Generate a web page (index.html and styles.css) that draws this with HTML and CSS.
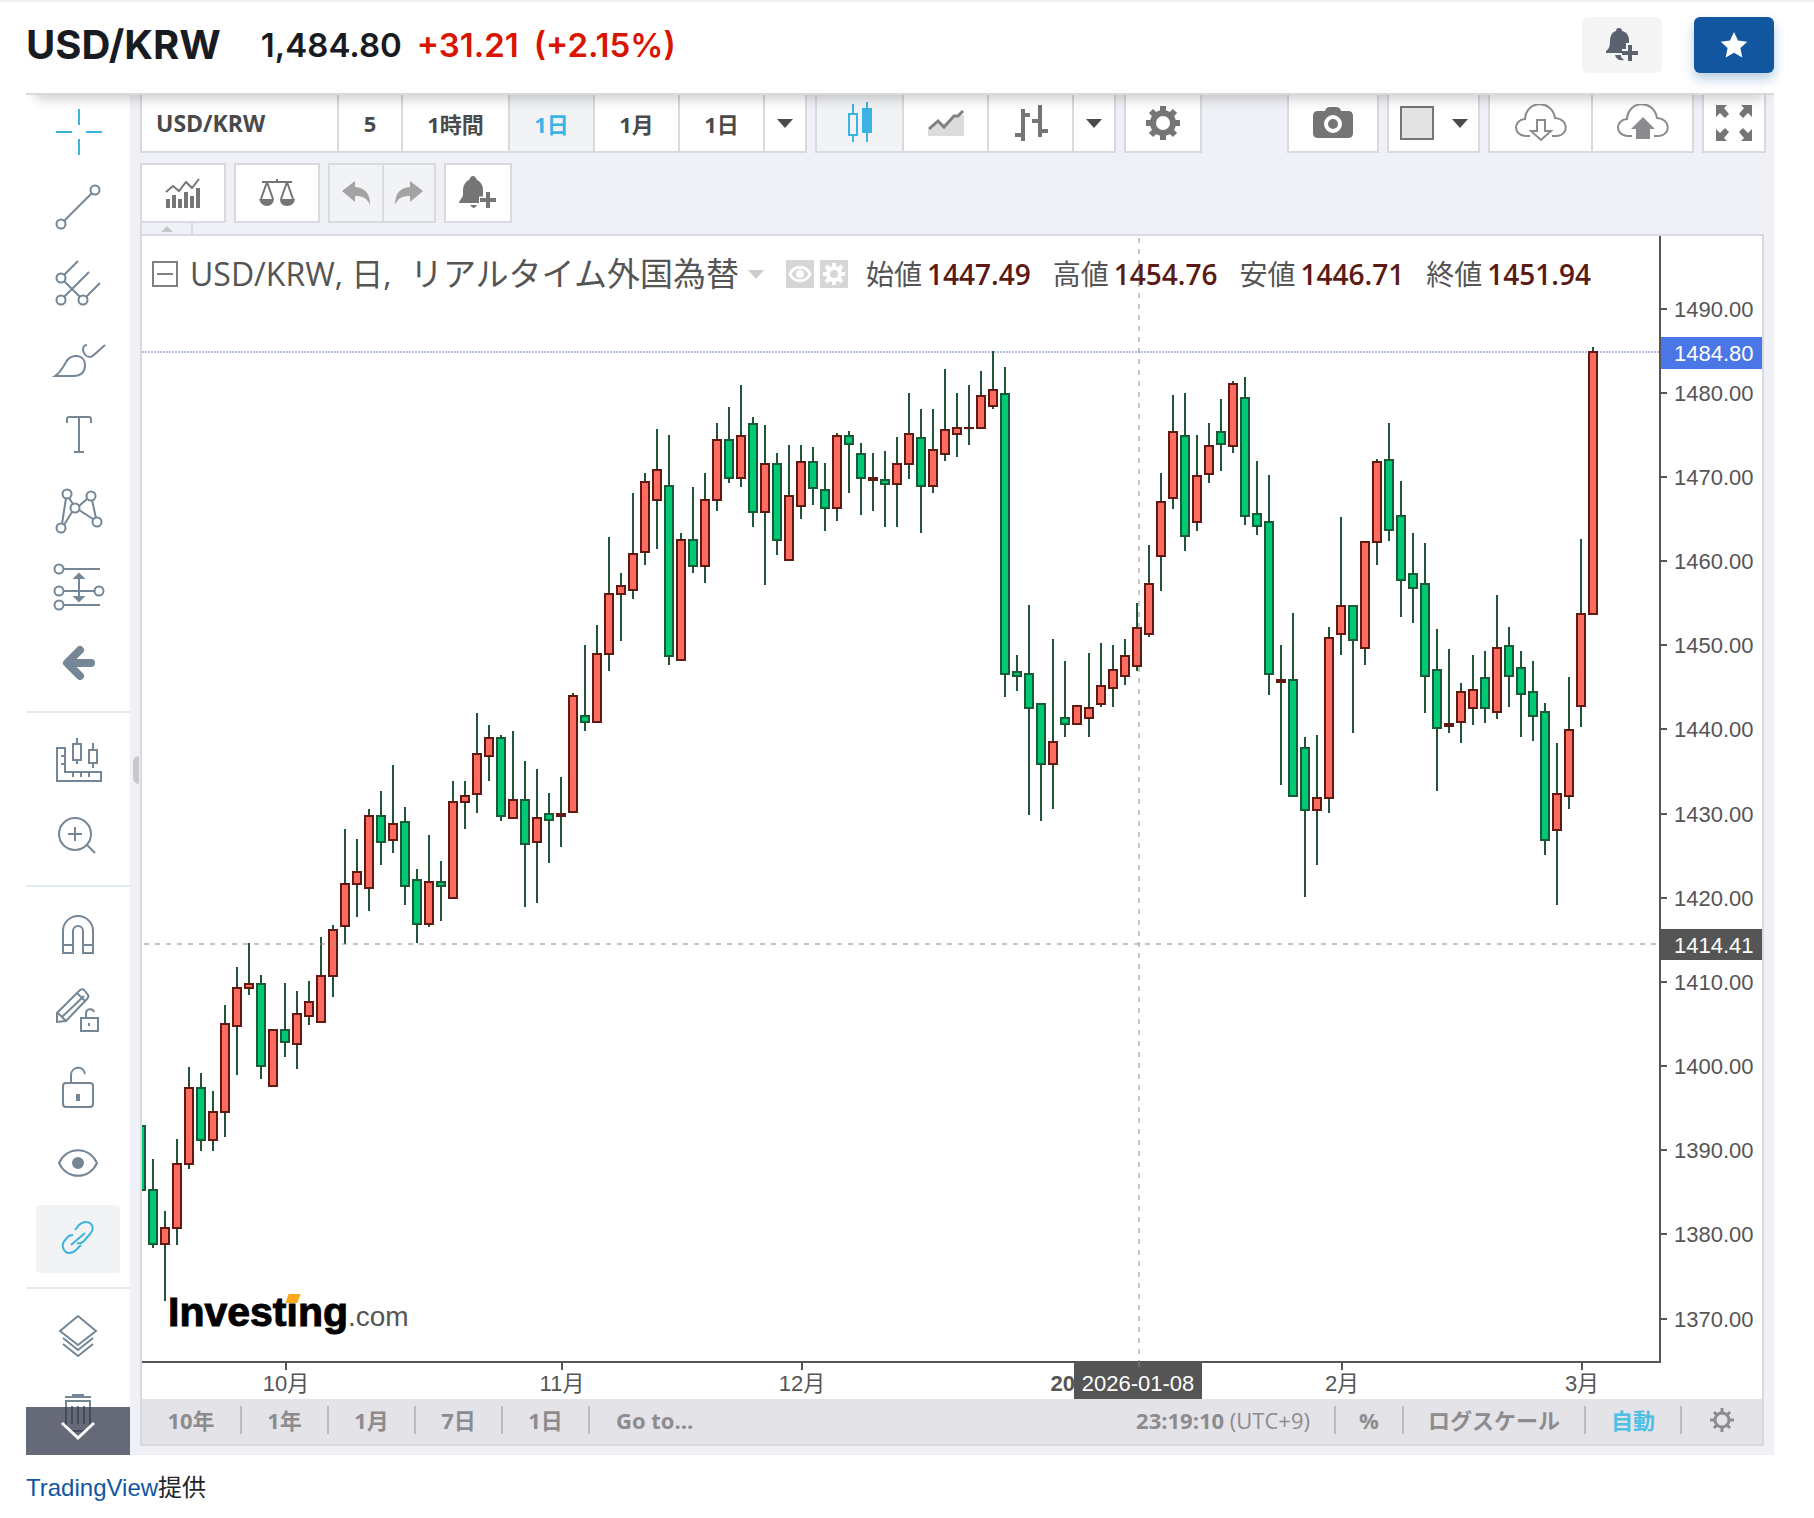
FILE: index.html
```html
<!DOCTYPE html>
<html lang="ja">
<head>
    <meta charset="UTF-8">
    <meta name="viewport" content="width=device-width, initial-scale=1.0">
    <title>USD/KRW</title>
    <link rel="stylesheet" href="styles.css">
</head>
<body>
    <header class="quote">
        <h1>USD/KRW</h1>
        <span class="price">1,484.80</span>
        <span class="change">+31.21</span>
        <span class="change">(+2.15%)</span>
        <div class="quote-actions">
            <button type="button" class="btn-alert" aria-label="Alert">
                <svg width="36" height="36" viewBox="0 0 36 36"><path fill="#5b616e" d="M15 1c2 0 3 1 3 3 5 1 7 5 7 9v3h-3v6h-4v4H2v-2c3-2 4-5 4-10 0-5 2-9 6-10 0-2 1-3 3-3zM11 28h6v2l3 3c-5 1-8-1-9-5z"/><path stroke="#5b616e" stroke-width="4" d="M26 18v16M18 26h16"/></svg>
            </button>
            <button type="button" class="btn-star" aria-label="Star">
                <svg width="28" height="28" viewBox="0 0 28 28"><path fill="#fff" d="M14 1l4 8.600 9.300 1.100-6.900 6.400 1.900 9.300L14 21.800l-8.300 4.600 1.900-9.300L.7 10.700 10 9.600z"/></svg>
            </button>
        </div>
    </header>

    <main class="terminal">
        <aside class="tools">
            <div class="tool-group">
                <button type="button" class="tool active" aria-label="Crosshair"><svg viewBox="0 0 52 52"><path d="M27 4v16M27 34v16M4 27h16M34 27h16"/></svg></button>
                <button type="button" class="tool" aria-label="Trend line"><svg viewBox="0 0 52 52"><circle cx="43" cy="9" r="4.500"/><circle cx="9" cy="43" r="4.500"/><path d="M40 12L12 40"/></svg></button>
                <button type="button" class="tool" aria-label="Pitchfork"><svg viewBox="0 0 52 52"><circle cx="9" cy="21" r="4.500"/><circle cx="9" cy="43" r="4.500"/><circle cx="31" cy="43" r="4.500"/><path d="M12 18L26 4M12 40l25-25M34 40l14-14M12 24l16 16"/></svg></button>
                <button type="button" class="tool" aria-label="Brush"><svg viewBox="0 0 52 52"><path d="M3 43c6-4 8-9 11-14 5-9 19-8 19 3 0 8-5 11-12 11zM35 12c-7 0-4 12 3 12 2 0 3-1 5-3l10-9"/></svg></button>
                <button type="button" class="tool" aria-label="Text"><svg viewBox="0 0 52 52"><path d="M15 14V10q0-2 2-2h20q2 0 2 2v4M27 8v35M22 43h10"/></svg></button>
                <button type="button" class="tool" aria-label="Pattern"><svg viewBox="0 0 52 52"><circle cx="15" cy="9" r="4.500"/><circle cx="39" cy="11" r="4.500"/><circle cx="23" cy="23" r="4.500"/><circle cx="9" cy="43" r="4.500"/><circle cx="45" cy="37" r="4.500"/><path d="M14 13L10 39M12 40l8-13M17 13l4 6M27 21l8-7M27 25l14 9M40 15l4 18"/></svg></button>
                <button type="button" class="tool" aria-label="Forecast"><svg viewBox="0 0 52 52"><circle cx="7" cy="8" r="4.500"/><circle cx="7" cy="30" r="4.500"/><circle cx="7" cy="44" r="4.500"/><circle cx="47" cy="30" r="4.500"/><path d="M12 8h36M12 30h31M12 44h36M27 14v26"/><path class="solid" d="M23 17l4-4 4 4zM23 36l4 4 4-4z"/></svg></button>
                <button type="button" class="tool" aria-label="Back"><svg viewBox="0 0 52 52"><path stroke-width="8" stroke-linecap="round" stroke-linejoin="round" d="M28 13L15 26l13 13M17 26h22"/></svg></button>
            </div>
            <div class="tool-group">
                <button type="button" class="tool" aria-label="Measure"><svg viewBox="0 0 52 52"><path d="M5 13h8v24h36v9H5zM9 21h4M9 29h4M21 38v4M29 38v4M37 38v4M25 3v6M25 25v4M21 9h8v16h-8zM41 8v7M41 28v5M37 15h8v13h-8z"/></svg></button>
                <button type="button" class="tool" aria-label="Zoom in"><svg viewBox="0 0 52 52"><circle cx="23" cy="23" r="16"/><path d="M16 23h14M23 16v14M35 34l8 8"/></svg></button>
            </div>
            <div class="tool-group">
                <button type="button" class="tool" aria-label="Magnet"><svg viewBox="0 0 52 52"><path d="M11 44V22a15 15 0 0 1 30 0v22H31V22a5 5 0 0 0-10 0v22zM11 36h10M31 36h10"/></svg></button>
                <button type="button" class="tool" aria-label="Drawing mode"><svg viewBox="0 0 52 52"><path d="M5 37v-9L28 5q3-2 5 1l3 4q1 2-1 4L14 36zM6 28l8 8M10 32l22-21M25 8l8 8M29 33h17v13H29zM34 33v-4c0-6 7-6 8-2M37 38v3"/></svg></button>
                <button type="button" class="tool" aria-label="Lock"><svg viewBox="0 0 52 52"><rect x="11" y="22" width="30" height="24" rx="3"/><path d="M19 22v-8c0-8 12-11 14-1"/><path stroke-width="4" d="M26 33v7"/></svg></button>
                <button type="button" class="tool" aria-label="Hide"><svg viewBox="0 0 52 52"><path d="M7 26c8-17 30-17 38 0-8 17-30 17-38 0z"/><circle class="solid" cx="26" cy="26" r="5"/></svg></button>
                <button type="button" class="tool active pressed" aria-label="Link"><svg viewBox="0 0 52 52"><path d="M19 32l14-12M23 17l4-5c8-8 19 1 11 9l-6 7c-2 2-4 3-7 2M21 22c-3 0-5 1-7 4-7 7-1 14 3 14 3 0 5-1 7-3l5-5"/></svg></button>
            </div>
            <div class="tool-group">
                <button type="button" class="tool" aria-label="Object tree"><svg viewBox="0 0 52 52"><path d="M26 5l18 15-18 14L8 20zM11 27l15 12 15-12M11 33l15 12 15-12"/></svg></button>
                <button type="button" class="tool" aria-label="Remove"><svg viewBox="0 0 52 52"><path d="M13 10h26M20 8h12M14 14h24v24q0 6-6 6H20q-6 0-6-6zM20 19v18M26 19v18M32 19v18"/></svg></button>
            </div>
            <button type="button" class="tools-more" aria-label="More"><svg width="36" height="22" viewBox="0 0 36 22"><path d="M2 3l16 15L34 3"/></svg></button>
        </aside>

        <section class="workspace">
            <span class="handle"></span>
            <div class="bar bar-top">
                <div class="group">
                    <button type="button" class="cell symbol">USD/KRW</button>
                    <button type="button" class="cell small">5</button>
                    <button type="button" class="cell wide">1時間</button>
                    <button type="button" class="cell selected">1日</button>
                    <button type="button" class="cell">1月</button>
                    <button type="button" class="cell">1日</button>
                    <button type="button" class="cell arrow" aria-label="More intervals"><i class="caret"></i></button>
                </div>
                <div class="group">
                    <button type="button" class="cell selected" aria-label="Candles"><svg width="26" height="42" viewBox="0 0 26 42"><path fill="none" stroke="#3bb3e4" stroke-width="2" d="M6 2v10M6 34v6M2 12h8v21H2zM20 0v40"/><path fill="#3bb3e4" d="M15 6h10v25H15z"/></svg></button>
                    <button type="button" class="cell" aria-label="Line chart"><svg width="36" height="26" viewBox="0 0 36 26"><path fill="#dcdcdc" d="M0 20l11-9 7 5L27 5h9v21H0z"/><path fill="none" stroke="#808080" stroke-width="3" d="M1 19l9-8 6 6L26 6h4l5-5"/></svg></button>
                    <button type="button" class="cell" aria-label="Bars"><svg width="34" height="38" viewBox="0 0 34 38"><path stroke="#757575" stroke-width="4" d="M9 5v32M1 31h8M9 11h7M26 1v32M18 17h8M26 27h8"/></svg></button>
                    <button type="button" class="cell arrow" aria-label="More styles"><i class="caret"></i></button>
                </div>
                <div class="group">
                    <button type="button" class="cell gear" aria-label="Settings"><svg width="36" height="36" viewBox="-18 -18 36 36"><circle r="10" fill="none" stroke="#757575" stroke-width="6"/><path stroke="#757575" stroke-width="6" d="M0-17v6M0 17v-6M-17 0h6M17 0h-6M-12-12l4 4M12 12l-4-4M-12 12l4-4M12-12l-4 4"/></svg></button>
                </div>
                <div class="group push">
                    <button type="button" class="cell" aria-label="Snapshot"><svg width="40" height="32" viewBox="0 0 40 32"><path fill="#757575" d="M12 4q1-4 5-4h6q4 0 5 4h7q5 0 5 5v17q0 5-5 5H5q-5 0-5-5V9q0-5 5-5z"/><circle cx="20" cy="17" r="7" fill="#757575" stroke="#fff" stroke-width="4"/></svg></button>
                </div>
                <div class="group">
                    <button type="button" class="cell color" aria-label="Colour"><i class="swatch"></i><i class="caret"></i></button>
                </div>
                <div class="group">
                    <button type="button" class="cell cloud" aria-label="Load"><svg width="54" height="38" viewBox="0 0 54 38"><path fill="none" stroke="#8c8c90" stroke-width="2" d="M16 32H11C-1 31-1 16 11 15 12-4 38-5 41 14c14 1 14 17 2 18h-5"/><path fill="#fff" stroke="#8c8c90" stroke-width="2" d="M23 16h8v11h6L27 36 17 27h6z"/></svg></button>
                    <button type="button" class="cell cloud" aria-label="Save"><svg width="54" height="38" viewBox="0 0 54 38"><path fill="none" stroke="#8c8c90" stroke-width="2" d="M16 32H11C-1 31-1 16 11 15 12-4 38-5 41 14c14 1 14 17 2 18h-5"/><path fill="#8c8c90" d="M20 35V25h-5l12-12 12 12h-5v10z"/></svg></button>
                </div>
                <div class="group">
                    <button type="button" class="cell full" aria-label="Full screen"><svg width="38" height="38" viewBox="0 0 38 38"><path fill="#757575" d="M1 1h11L9 4l5 6-4 4-5-5-4 4zM37 1v12l-4-4-5 5-4-4 5-6-3-3zM1 37V25l4 4 5-5 4 4-5 6 3 3zM37 37H26l3-3-5-6 4-4 5 5 4-4z"/></svg></button>
                </div>
            </div>
            <div class="bar">
                <div class="group">
                    <button type="button" class="cell" aria-label="Indicators"><svg width="36" height="32" viewBox="0 0 36 32"><path fill="none" stroke="#757575" stroke-width="2" d="M1 15l7-6 6 5 7-9 6 6 7-9"/><path stroke="#757575" stroke-width="4" d="M3 31v-9M9 31V18M15 31v-9M21 31V15M27 31V19M33 31V11"/></svg></button>
                </div>
                <div class="group">
                    <button type="button" class="cell" aria-label="Compare"><svg width="36" height="28" viewBox="0 0 36 28"><path fill="none" stroke="#757575" stroke-width="2" d="M3 3h30M18 0v3M8 3L2 20M8 3l6 17M28 3l-6 17M28 3l6 17"/><path fill="#757575" d="M0 20h15q-1 7-7 7t-8-7zM21 20h15q-1 7-8 7t-7-7z"/></svg></button>
                </div>
                <div class="group muted">
                    <button type="button" class="cell step" aria-label="Undo"><svg width="28" height="24" viewBox="0 0 28 24"><path fill="#a3a3a3" d="M0 10L13 0v6c10 1 15 6 15 18-3-7-7-9-15-9v6z"/></svg></button>
                    <button type="button" class="cell step" aria-label="Redo"><svg width="28" height="24" viewBox="0 0 28 24"><path fill="#a3a3a3" d="M28 10L15 0v6C5 7 0 12 0 24c3-7 7-9 15-9v6z"/></svg></button>
                </div>
                <div class="group">
                    <button type="button" class="cell bell" aria-label="Add alert"><svg width="38" height="34" viewBox="0 0 38 34"><path fill="#757575" d="M14 0c2 0 3 2 4 4 4 2 6 6 6 10v6l5 7H0c0-3 4-5 4-9v-4c0-4 2-8 6-10 1-2 2-4 4-4zM11 29h7q-3 6-7 0z"/><path stroke="#fff" stroke-width="7" d="M29 15v18M20 24h18"/><path stroke="#757575" stroke-width="4" d="M29 16v16M21 24h16"/></svg></button>
                </div>
            </div>
            <div class="collapse"><i class="caret up"></i></div>

            <div class="chart">
                <svg class="plot" id="plot"></svg>
                <div class="legend">
                    <svg class="box" width="26" height="26" viewBox="0 0 26 26"><path fill="none" stroke="#808080" stroke-width="2" d="M1 1h24v24H1zM5 13h16"/></svg>
                    <span class="legend-title">USD/KRW, 日, <span>リアルタイム外国為替</span></span>
                    <i class="caret pale"></i>
                    <span class="mini"><svg width="28" height="28" viewBox="-14 -14 28 28"><path stroke-width="3" d="M-10 0C-6-9 6-9 10 0 6 9-6 9-10 0z"/><circle r="2"/></svg></span>
                    <span class="mini"><svg width="28" height="28" viewBox="-14 -14 28 28"><circle r="6"/><path d="M0-11v4M0 11v-4M-11 0h4M11 0h-4M-8-8l3 3M8 8l-3-3M-8 8l3-3M8-8l-3 3"/></svg></span>
                    <span class="ohlc">始値<b>1447.49</b></span>
                    <span class="ohlc">高値<b>1454.76</b></span>
                    <span class="ohlc">安値<b>1446.71</b></span>
                    <span class="ohlc">終値<b>1451.94</b></span>
                </div>
                <div class="logo"><b>Invest<span class="dot">i</span>ng</b>.com</div>
                <div class="ranges">
                    <button type="button">10年</button>
                    <button type="button">1年</button>
                    <button type="button">1月</button>
                    <button type="button">7日</button>
                    <button type="button">1日</button>
                    <button type="button" class="goto">Go to...</button>
                    <button type="button" class="clock">23:19:10 <span>(UTC+9)</span></button>
                    <button type="button" class="percent">%</button>
                    <button type="button" class="log">ログスケール</button>
                    <button type="button" class="auto">自動</button>
                    <button type="button" class="prefs" aria-label="Properties"><svg width="26" height="26" viewBox="-13 -13 26 26"><circle r="7"/><path d="M0-12v5M0 12v-5M-12 0h5M12 0h-5M-8-8l3 3M8 8l-3-3M-8 8l3-3M8-8l-3 3"/></svg></button>
                </div>
            </div>
        </section>
    </main>

    <footer class="credit"><a href="#">TradingView</a>提供</footer>

    <script src="chart.js"></script>
</body>
</html>
```
FILE: styles.css
```css
* {
    box-sizing: border-box;
}
body {
    margin: 0;
    border-top: 2px solid #efeff0;
    background: #fff;
    font-family: "Open Sans", "Noto Sans CJK JP", sans-serif;
    color: #4a4a4a;
}
button {
    margin: 0;
    padding: 0;
    border: 0;
    background: none;
    font: inherit;
    color: inherit;
    cursor: pointer;
}
svg {
    display: block;
}

/* quote header */
.quote {
    position: relative;
    z-index: 2;
    display: flex;
    align-items: center;
    height: 93px;
    margin: 0 40px 0 26px;
    padding-bottom: 6px;
    border-bottom: 2px solid #d9d9d9;
    background: #fff;
    box-shadow: 0 14px 12px -10px rgba(0, 0, 0, 0.2);
    font-family: Inter, sans-serif;
    color: #181c21;
}
.quote h1 {
    margin: 0 40px 0 0;
    font-size: 40px;
    font-weight: 700;
}
.price, .change {
    margin-right: 15px;
    font-size: 33px;
    font-weight: 600;
}
.change {
    color: #d91400;
}
.quote-actions {
    display: flex;
    gap: 32px;
    margin-left: auto;
}
.quote-actions button {
    display: flex;
    align-items: center;
    justify-content: center;
    width: 80px;
    height: 56px;
    border-radius: 6px;
}
.btn-alert {
    background: #f5f5f5;
}
.quote-actions .btn-star {
    background: #1256a0;
    box-shadow: 0 6px 12px rgba(18, 86, 160, 0.3);
}

.terminal {
    display: flex;
    margin: 0 40px 0 26px;
    background: #f0f1f6;
}

/* drawing tools */
.tools {
    position: relative;
    flex: none;
    width: 104px;
    height: 1360px;
    overflow: hidden;
    background: #fff;
}
.tool-group {
    display: flex;
    flex-direction: column;
    align-items: center;
    padding: 10px 0;
    border-bottom: 2px solid #e1ebf0;
}
.tool-group:first-child {
    padding-top: 0;
}
.tool-group:nth-last-child(2) {
    border-bottom: 0;
}
.tool {
    display: flex;
    align-items: center;
    justify-content: center;
    width: 84px;
    height: 68px;
    margin: 4px 0;
    border-radius: 4px;
}
.tool-group:first-child .tool:first-child {
    margin-top: 2px;
}
.tool svg {
    width: 52px;
    height: 52px;
    overflow: visible;
    fill: none;
    stroke: #758696;
    stroke-width: 2;
}
.tool .solid {
    fill: #758696;
}
.tool.active svg {
    stroke: #3eb2df;
}
.tool.pressed {
    background: #f1f3f5;
}
.tools-more {
    position: absolute;
    left: 0;
    bottom: 0;
    display: flex;
    align-items: center;
    justify-content: center;
    width: 100%;
    height: 48px;
    background: rgba(54, 58, 76, 0.76);
}
.tools-more path {
    fill: none;
    stroke: #fff;
    stroke-width: 3;
}

/* toolbars */
.workspace {
    position: relative;
    flex: 1;
    min-width: 0;
    padding: 0 8px 9px 10px;
}
.handle {
    position: absolute;
    left: 3px;
    top: 661px;
    width: 6px;
    height: 28px;
    border-radius: 6px 0 0 6px;
    background: #c9c9cb;
}
.bar {
    display: flex;
    gap: 8px;
    height: 60px;
}
.bar-top {
    height: 58px;
    margin-bottom: 10px;
}
.group {
    display: flex;
    border: 2px solid #d9dadf;
    background: #fff;
}
.bar-top .group {
    border-top: 0;
}
.push {
    margin-left: auto;
}
.cell {
    display: flex;
    align-items: center;
    justify-content: center;
    width: 85px;
    font-size: 22px;
    font-weight: 700;
}
.cell:only-child {
    width: 82px;
}
.cell + .cell {
    border-left: 2px solid #d9dadf;
}
.cell.symbol {
    justify-content: flex-start;
    width: 195px;
    padding-left: 14px;
    font-size: 23px;
}
.cell.small {
    width: 64px;
}
.cell.wide {
    width: 107px;
}
.cell.arrow {
    width: 42px;
}
.group .cell.gear {
    width: 74px;
}
.push .cell {
    width: 88px;
}
.group .cell.color {
    gap: 18px;
    width: 89px;
}
.cell.cloud {
    width: 101px;
}
.group .cell.full {
    width: 60px;
}
.cell.step {
    width: 52px;
}
.group .cell.bell {
    width: 64px;
}
.cell.selected {
    background: #f1f3f5;
    color: #3bb3e4;
}
.muted {
    background: #f1f3f7;
}
.caret {
    border: 8px solid transparent;
    border-top: 9px solid #4a4a4a;
    border-bottom: 0;
}
.swatch {
    width: 34px;
    height: 34px;
    border: 2px solid #757575;
    background: #e3e3e3;
}
.collapse {
    display: flex;
    align-items: center;
    justify-content: center;
    width: 53px;
    height: 11px;
    border: solid #d9dadf;
    border-width: 0 2px;
}
.caret.up {
    border: 6px solid transparent;
    border-top: 0;
    border-bottom: 6px solid #c4c5c9;
}

/* chart */
.chart {
    position: relative;
    margin-right: 2px;
    border: 2px solid #d9dadf;
    background: #fff;
}
.plot {
    width: 100%;
    height: 1163px;
    font-family: "Liberation Sans", "Noto Sans CJK JP", sans-serif;
    font-size: 22px;
    fill: #555;
}
.wick {
    stroke: #225437;
    stroke-width: 2;
}
.up {
    fill: #ff6b5e;
    stroke: #5f1a12;
    stroke-width: 2;
}
.down {
    fill: #00c974;
    stroke: #1a5a38;
    stroke-width: 2;
}
.axis {
    stroke: #555;
    stroke-width: 2;
}
.cross {
    stroke: rgba(140, 140, 140, 0.5);
    stroke-width: 2;
    stroke-dasharray: 5 6;
}
.last-line {
    stroke: #b4c0ea;
    stroke-width: 2;
    stroke-dasharray: 2 1;
}
.tag {
    fill: #555;
}
.tag-last {
    fill: #4a76e6;
}
.tag-text {
    fill: #fff;
}
.year {
    font-weight: bold;
}
.legend {
    position: absolute;
    left: 10px;
    top: 16px;
    display: flex;
    align-items: center;
    height: 44px;
    white-space: nowrap;
    color: #555;
}
.legend-title {
    margin: 0 9px 0 12px;
    font-size: 32px;
    line-height: 44px;
}
.legend-title span {
    margin-left: 10px;
    font-size: 33px;
}
.caret.pale {
    border-top-color: #ccc;
}
.mini {
    margin-left: 6px;
    background: #d6d6d6;
}
.caret.pale + .mini {
    margin-left: 22px;
}
.mini svg {
    fill: none;
    stroke: #fff;
    stroke-width: 4;
}
.ohlc {
    margin-left: 22px;
    font-size: 28px;
    line-height: 44px;
}
.mini + .ohlc {
    margin-left: 18px;
}
.ohlc b {
    margin-left: 5px;
    font-weight: 600;
    color: #5b1a13;
}
.logo {
    position: absolute;
    left: 26px;
    top: 1053px;
    font-family: "Liberation Sans", sans-serif;
    font-size: 28px;
    line-height: 46px;
    color: #555;
}
.logo b {
    font-size: 41px;
    color: #000;
    -webkit-text-stroke: 1px #000;
}
.dot {
    position: relative;
}
.dot::after {
    content: "";
    position: absolute;
    left: 0;
    top: 5px;
    width: 12px;
    height: 9px;
    background: #fba81c;
    transform: skewX(-20deg);
}

/* range bar */
.ranges {
    display: flex;
    align-items: center;
    height: 45px;
    padding-bottom: 3px;
    background: #e4e3e8;
    font-size: 22px;
    font-weight: 700;
    color: #8c8c8f;
}
.ranges button {
    width: 87px;
    height: 28px;
    line-height: 28px;
    border-right: 2px solid #bbbbbf;
    white-space: nowrap;
}
.ranges button:first-child {
    width: 100px;
}
.ranges .goto {
    width: auto;
    padding-left: 26px;
    border-right: 0;
}
.ranges .clock {
    width: auto;
    margin-left: auto;
    padding-right: 24px;
}
.clock span {
    font-weight: 400;
}
.ranges .percent {
    width: 68px;
}
.ranges .log {
    width: 182px;
}
.ranges .auto {
    width: 96px;
    color: #4fbfe3;
}
.ranges .prefs {
    display: flex;
    align-items: center;
    justify-content: center;
    width: 80px;
    border-right: 0;
}
.prefs svg {
    fill: none;
    stroke: #8c8c8f;
    stroke-width: 3;
}

.credit {
    margin: 15px 26px 0;
    font-family: "Liberation Sans", "Noto Sans CJK JP", sans-serif;
    font-size: 24px;
    line-height: 36px;
    color: #232526;
}
.credit a {
    color: #1256a0;
    text-decoration: none;
}
```
FILE: chart.js
```js
// [direction, high, body top, body bottom, low], oldest first
var candles = [
    ["d",1125,1125,1191,1191], ["d",1159,1189,1245,1248], ["u",1211,1227,1245,1301], ["u",1139,1163,1229,1245],
    ["u",1067,1087,1165,1169], ["d",1073,1087,1141,1151], ["u",1091,1111,1141,1151], ["u",1005,1023,1113,1137],
    ["u",967,987,1027,1075], ["u",943,983,989,995], ["d",975,983,1067,1079], ["u",1029,1029,1087,1087],
    ["d",983,1029,1043,1057], ["u",991,1013,1045,1069], ["u",981,1001,1017,1025], ["u",937,975,1023,1023],
    ["u",925,929,977,997], ["u",829,883,927,944], ["u",839,871,885,917], ["u",809,815,889,911],
    ["d",791,815,843,865], ["u",765,823,841,853], ["d",807,821,887,905], ["d",869,879,925,943],
    ["u",835,881,925,927], ["d",861,881,887,921], ["u",781,801,899,899], ["u",781,795,803,829],
    ["u",713,753,795,813], ["u",725,737,757,781], ["d",735,737,817,821], ["u",731,799,819,819],
    ["d",761,799,845,907], ["u",769,817,843,903], ["d",793,813,821,863], ["u",777,813,817,847],
    ["u",693,695,813,813], ["d",645,715,723,731], ["u",625,653,723,723], ["u",537,593,655,671],
    ["u",573,585,595,641], ["u",493,553,591,599], ["u",473,481,553,565], ["u",429,469,501,549],
    ["d",435,485,657,665], ["u",533,539,661,661], ["d",487,539,567,573], ["u",473,499,567,583],
    ["u",423,439,501,511], ["d",407,439,479,483], ["u",385,435,479,487], ["d",417,423,513,527],
    ["u",425,463,513,585], ["d",453,463,541,555], ["u",445,495,561,561], ["u",445,461,507,519],
    ["d",447,461,489,505], ["d",463,489,509,531], ["u",433,435,509,521], ["d",431,435,445,493],
    ["d",443,453,479,515], ["u",453,477,481,511], ["d",451,479,485,527], ["u",437,463,485,527],
    ["u",393,433,465,479], ["d",409,437,487,533], ["u",409,449,487,493], ["u",369,429,455,461],
    ["u",393,427,435,457], ["u",385,427,429,445], ["u",371,395,429,429], ["u",351,389,407,409],
    ["d",367,393,675,697], ["d",655,671,677,691], ["d",605,673,709,815], ["d",703,703,765,821],
    ["u",639,741,765,809], ["d",661,717,725,737], ["u",705,705,725,725], ["u",653,707,719,737],
    ["u",643,685,705,707], ["u",645,669,689,707], ["u",639,655,677,685], ["u",603,627,667,671],
    ["u",545,583,635,637], ["u",473,501,557,591], ["u",395,431,499,509], ["d",393,435,537,551],
    ["u",435,475,523,531], ["u",423,445,475,483], ["d",399,431,445,471], ["u",381,383,447,453],
    ["d",377,397,517,525], ["d",461,513,527,535], ["d",475,521,675,695], ["u",645,679,683,785],
    ["d",613,679,797,797], ["d",737,747,811,897], ["u",735,797,811,865], ["u",627,637,799,813],
    ["u",517,605,635,655], ["d",605,605,641,733], ["u",541,541,649,665], ["u",459,461,543,565],
    ["d",423,459,531,541], ["d",481,515,581,617], ["d",533,573,589,623], ["d",543,583,677,713],
    ["d",629,669,729,791], ["u",649,723,727,733], ["u",683,691,723,743], ["u",655,689,709,725],
    ["d",651,677,709,723], ["u",595,647,713,719], ["d",627,645,677,707], ["d",651,667,695,737],
    ["d",661,691,717,741], ["d",703,711,841,855], ["u",743,793,831,905], ["u",677,729,797,809],
    ["u",539,613,707,727], ["u",347,351,615,615]
];
// months and their distance from the price axis
var months = [["10月", 1374], ["11月", 1098], ["12月", 858], ["2月", 318], ["3月", 78]];

var TOP = 236;
var BOTTOM = 1126;
var AXIS = 102;
var STEP = 12;
var plot = document.getElementById("plot");

function add(name, attrs, text) {
    var el = document.createElementNS("http://www.w3.org/2000/svg", name);
    for (var key in attrs) {
        el.setAttribute(key, attrs[key]);
    }
    if (text) {
        el.textContent = text;
    }
    plot.appendChild(el);
}

function line(cls, x1, y1, x2, y2) {
    add("line", { "class": cls, x1: x1, y1: y1, x2: x2, y2: y2 });
}

function draw() {
    var width = plot.clientWidth;
    var right = width - AXIS;
    var i, x, y;
    plot.innerHTML = "";

    line("last-line", 0, 116, right, 116);

    for (i = 0; i < candles.length; i++) {
        var c = candles[i];
        x = right - 67 - STEP * (candles.length - 1 - i);
        line("wick", x, c[1] - TOP, x, c[4] - TOP);
        add("rect", {
            "class": c[0] === "u" ? "up" : "down",
            x: x - 4, y: c[2] - TOP + 1, width: 8, height: Math.max(c[3] - c[2] - 2, 0.1)
        });
    }

    // crosshair
    line("cross", right - 521, 2, right - 521, BOTTOM);
    line("cross", 2, 708, right, 708);

    // axes
    line("axis", right, 0, right, BOTTOM);
    line("axis", 0, BOTTOM, right + 1, BOTTOM);
    for (i = 0; i <= 12; i++) {
        y = Math.round(72.5 + i * 1010 / 12);
        line("axis", right, y, right + 7, y);
        add("text", { x: right + 14, y: y + 8 }, (1490 - i * 10) + ".00");
    }
    for (i = 0; i < months.length; i++) {
        x = right - months[i][1];
        line("axis", x, BOTTOM, x, BOTTOM + 8);
        add("text", { x: x, y: 1155, "text-anchor": "middle" }, months[i][0]);
    }
    // only the part left of the date tag is visible
    add("text", { "class": "year", x: right - 585, y: 1155, "text-anchor": "end" }, "20");

    // tags
    add("rect", { "class": "tag-last", x: right + 1, y: 101, width: AXIS, height: 32 });
    add("text", { "class": "tag-text", x: right + 14, y: 125 }, "1484.80");
    add("rect", { "class": "tag", x: right + 1, y: 693, width: AXIS, height: 31 });
    add("text", { "class": "tag-text", x: right + 14, y: 717 }, "1414.41");
    add("rect", { "class": "tag", x: right - 586, y: BOTTOM, width: 128, height: 37 });
    add("text", { "class": "tag-text", x: right - 522, y: 1155, "text-anchor": "middle" }, "2026-01-08");
    line("cross", right - 521, BOTTOM, right - 521, BOTTOM + 6);
}

draw();
window.addEventListener("resize", draw);
```
